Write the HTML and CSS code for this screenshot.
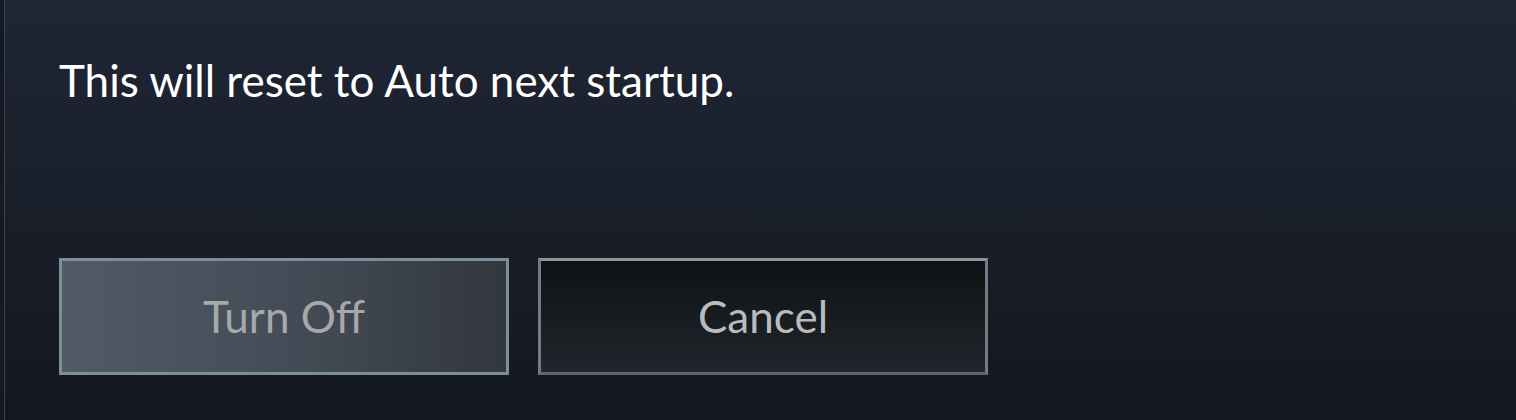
FILE: index.html
```html
<!DOCTYPE html>
<html>
<head>
<meta charset="utf-8">
<link rel="stylesheet" href="styles.css">
</head>
<body>
<div class="dialog">
  <p class="message">This will reset to Auto next startup.</p>
  <div class="actions">
    <button class="btn btn-primary">Turn Off</button>
    <button class="btn btn-secondary">Cancel</button>
  </div>
</div>
</body>
</html>
```
FILE: styles.css
```css
html, body {
  margin: 0;
  height: 100%;
}
body {
  background: #151a22;
  font-family: "Lato", "Noto Sans", sans-serif;
  overflow: hidden;
}
.dialog {
  margin-left: 4px;
  height: 420px;
  box-sizing: border-box;
  border-left: 1px solid #39424f;
  background: linear-gradient(180deg, #1f2634 0%, #1a202b 45%, #13171e 100%);
  padding: 54px 0 0 54px;
}
.message {
  margin: 0;
  font-size: 44px;
  line-height: 53px;
  color: #ffffff;
  white-space: nowrap;
}
.actions {
  display: flex;
  gap: 29px;
  margin-top: 151px;
}
.btn {
  width: 450px;
  height: 117px;
  box-sizing: border-box;
  border: 3px solid;
  font-family: "Lato", "Noto Sans", sans-serif;
  font-size: 44px;
  line-height: 53px;
  padding: 0 0 1px 0;
  cursor: pointer;
}
.btn-primary {
  border-color: #7c8e9a;
  background: linear-gradient(90deg, #505b66 0%, #444d57 50%, #33373e 100%);
  color: #a6a8aa;
}
.btn-secondary {
  border-color: #8d959d #737b83 #5e656c;
  background: linear-gradient(180deg, #0f1215 0%, #171c20 50%, #20262d 100%);
  color: #b9bbbd;
}
```
